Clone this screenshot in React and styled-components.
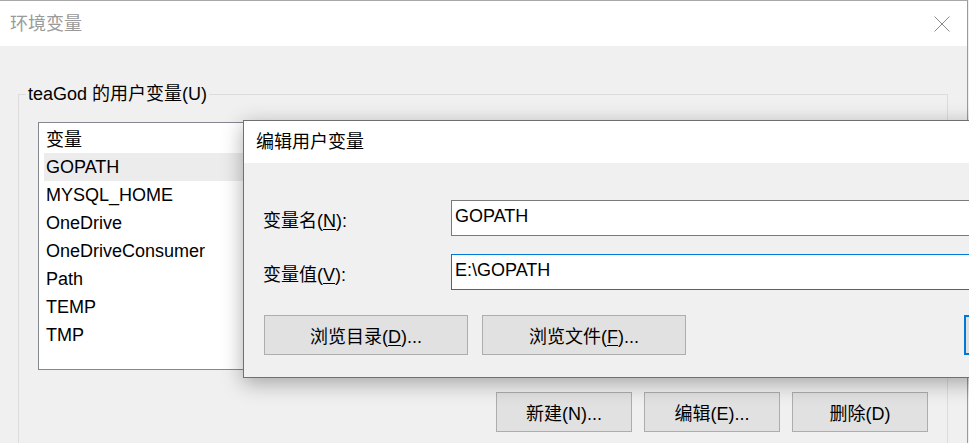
import React from 'react';
import styled, { createGlobalStyle } from 'styled-components';

const FONT = `"Liberation Sans", "Noto Sans CJK SC", sans-serif`;

const GlobalStyle = createGlobalStyle`
  html, body { margin: 0; padding: 0; overflow: hidden; background: #f0f0f0; }
  body { font-family: ${FONT}; font-size: 18px; color: #000; }
  #root { width: 969px; height: 443px; position: relative; overflow: hidden; }
  * { box-sizing: border-box; }
`;

const Window = styled.div`
  position: relative;
  width: 968px;
  height: 443px;
  border-top: 1px solid #a8a8a8;
  border-right: 1px solid #9a9a9a;
  display: flex;
  flex-direction: column;
  background: #f0f0f0;
`;

const TitleBar = styled.div`
  height: 45px;
  flex: none;
  background: #fff;
  display: flex;
  align-items: center;
  justify-content: space-between;
  padding: 0 17px 0 10px;
`;

const Title = styled.span`
  font-size: 18px;
  color: ${(p) => (p.$active ? '#000' : '#9a9a9a')};
  line-height: 1;
`;

const Body = styled.div`
  flex: 1;
  padding: 36px 0 0 18px;
  display: flex;
  flex-direction: column;
`;

const Group = styled.fieldset`
  margin: 0;
  width: 930px;
  flex: 1;
  min-width: 0;
  border: 1px solid #dcdcdc;
  border-bottom: none;
  padding: 16px 19px 0 19px;
`;

const Legend = styled.legend`
  margin-left: -12px;
  padding: 0 2px;
  font-size: 18px;
  line-height: 24px;
`;

const List = styled.div`
  height: 248px;
  border: 1px solid #828790;
  background: #fff;
  display: flex;
  flex-direction: column;
`;

const ListHeader = styled.div`
  height: 30px;
  padding-left: 7px;
  display: flex;
  align-items: center;
`;

const ListRow = styled.div`
  height: 28px;
  margin-left: 5px;
  padding-left: 2px;
  display: flex;
  align-items: center;
  background: ${(p) => (p.$selected ? '#ececec' : 'transparent')};
`;

const ButtonRow = styled.div`
  margin-top: 22px;
  display: flex;
  justify-content: flex-end;
  gap: 12px;
`;

const Button = styled.button`
  width: ${(p) => p.$w || 136}px;
  height: 40px;
  background: #e1e1e1;
  border: ${(p) => (p.$default ? '2px solid #0078d7' : '1px solid #adadad')};
  font-family: ${FONT};
  font-size: 18px;
  color: #000;
  padding: 0;
  flex: none;
`;

const Key = styled.span`
  text-decoration: underline;
  text-underline-offset: 2px;
`;

const Dialog = styled.div`
  position: absolute;
  left: 243px;
  top: 120px;
  width: 1028px;
  border: 1px solid #707070;
  background: #f0f0f0;
  box-shadow: 0 5px 20px rgba(0, 0, 0, 0.32);
  display: flex;
  flex-direction: column;
`;

const DialogTitleBar = styled.div`
  height: 42px;
  background: #fff;
  display: flex;
  align-items: center;
  padding-left: 12px;
`;

const DialogBody = styled.div`
  padding: 37px 20px 22px 19px;
  display: flex;
  flex-direction: column;
`;

const Form = styled.div`
  display: grid;
  grid-template-columns: 188px 1fr;
  row-gap: 18px;
  align-items: center;
`;

const Label = styled.label`
  font-size: 18px;
  padding-top: 1px;
`;

const Field = styled.input`
  height: 36px;
  width: 100%;
  border: 1px solid ${(p) => (p.$focused ? '#0078d7' : '#7a7a7a')};
  background: #fff;
  font-family: ${FONT};
  font-size: 18px;
  color: #000;
  padding: 0 0 3px 3px;
  outline: none;
`;

const DialogButtons = styled.div`
  margin-top: 25px;
  padding-left: 1px;
  display: flex;
  gap: 14px;
`;

const Spacer = styled.div`
  flex: 1;
`;

const CloseIcon = () => (
  <svg width="16" height="16" viewBox="0 0 16 16" aria-hidden="true">
    <path d="M0.5 0.5 L15.5 15.5 M15.5 0.5 L0.5 15.5" stroke="#8a8a8a" strokeWidth="1" fill="none" />
  </svg>
);

const vars = ['GOPATH', 'MYSQL_HOME', 'OneDrive', 'OneDriveConsumer', 'Path', 'TEMP', 'TMP'];

export default function App() {
  return (
    <>
      <GlobalStyle />
      <Window>
        <TitleBar>
          <Title>环境变量</Title>
          <CloseIcon />
        </TitleBar>
        <Body>
          <Group>
            <Legend>teaGod 的用户变量(U)</Legend>
            <List>
              <ListHeader>变量</ListHeader>
              {vars.map((v) => (
                <ListRow key={v} $selected={v === 'GOPATH'}>
                  {v}
                </ListRow>
              ))}
            </List>
            <ButtonRow>
              <Button>新建(N)...</Button>
              <Button>编辑(E)...</Button>
              <Button>删除(D)</Button>
            </ButtonRow>
          </Group>
        </Body>
      </Window>
      <Dialog>
        <DialogTitleBar>
          <Title $active>编辑用户变量</Title>
        </DialogTitleBar>
        <DialogBody>
          <Form>
            <Label>
              变量名(<Key>N</Key>):
            </Label>
            <Field readOnly defaultValue="GOPATH" />
            <Label>
              变量值(<Key>V</Key>):
            </Label>
            <Field readOnly $focused defaultValue="E:\GOPATH" />
          </Form>
          <DialogButtons>
            <Button $w={204}>
              浏览目录(<Key>D</Key>)...
            </Button>
            <Button $w={204}>
              浏览文件(<Key>F</Key>)...
            </Button>
            <Spacer />
            <Button $default aria-label="确定" />
            <Button aria-label="取消" />
          </DialogButtons>
        </DialogBody>
      </Dialog>
    </>
  );
}
